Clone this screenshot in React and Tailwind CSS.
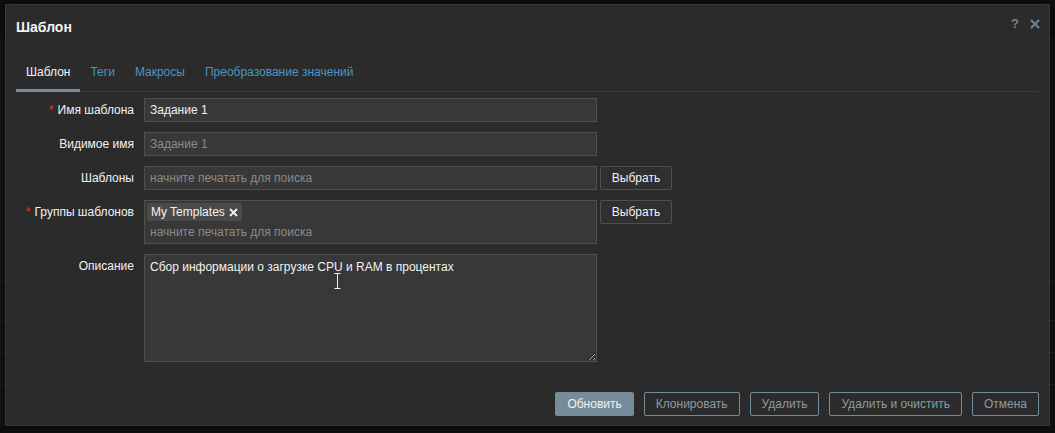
const Row = ({ label, required, children, className = '' }) => (
  <div className={`flex items-start gap-[10px] ${className}`}>
    <div className="flex h-[24px] w-[118px] shrink-0 items-center justify-end text-[12px] text-[#f2f2f2]">
      {required && <span className="mr-[4px] text-[#e33734]">*</span>}
      {label}
    </div>
    <div className="flex items-start gap-[3px]">{children}</div>
  </div>
);

const SelectButton = () => (
  <button
    type="button"
    className="h-[24px] w-[72px] shrink-0 rounded-[2px] border border-[#4f4f4f] bg-[#2f2f2f] text-[12px] text-[#f2f2f2]"
  >
    Выбрать
  </button>
);

const FooterButton = ({ children, primary }) => (
  <button
    type="button"
    className={
      primary
        ? 'h-[24px] rounded-[2px] border border-[#768d99] bg-[#768d99] px-[11px] text-[12px] text-[#f2f2f2]'
        : 'h-[24px] rounded-[2px] border border-[#768d99] bg-transparent px-[11px] text-[12px] text-[#8c9ca5]'
    }
  >
    {children}
  </button>
);

const tabs = ['Шаблон', 'Теги', 'Макросы', 'Преобразование значений'];

export default function App() {
  return (
    <div className="relative h-[433px] w-[1055px] overflow-hidden bg-[#0e0f11] font-['Liberation_Sans',Arial,sans-serif]">
      {/* page behind the overlay */}
      <div className="mt-[38px] flex h-[388px] flex-col bg-[#131416]">
        <div className="mt-[243px] h-px bg-[#1f2022]" />
        <div className="mt-[38px] h-px bg-[#1f2022]" />
        <div className="mt-[31px] h-px bg-[#1f2022]" />
        <div className="mt-[31px] h-px bg-[#1f2022]" />
      </div>

      {/* dialog */}
      <div className="absolute left-[5px] top-[4px] flex h-[422px] w-[1045px] flex-col border border-[#383838] bg-[#2b2b2b] px-[10px] shadow-[0_0_8px_rgba(0,0,0,0.6)]">
        <div className="flex h-[44px] items-center justify-between">
          <h4 className="text-[14px] font-bold text-[#f2f2f2]">Шаблон</h4>
          <div className="-mt-[6px] flex items-center gap-[10px] text-[#6f8592]">
            <span className="text-[13px] font-bold">?</span>
            <svg width="12" height="12" viewBox="0 0 12 12" className="mr-[-2px]">
              <path d="M2 2 L10 10 M10 2 L2 10" stroke="currentColor" strokeWidth="2" />
            </svg>
          </div>
        </div>

        <div className="mt-[10px] flex border-b border-[#383838]">
          {tabs.map((t, i) => (
            <div
              key={t}
              className={
                i === 0
                  ? 'mb-[-1px] border-b-[3px] border-[#768d99] px-[10px] pb-[8px] pt-[4px] text-[12px] text-[#f2f2f2]'
                  : 'px-[10px] pb-[9px] pt-[4px] text-[12px] text-[#4796c4]'
              }
            >
              {t}
            </div>
          ))}
        </div>

        <div className="mt-[6px] flex flex-col">
          <Row label="Имя шаблона" required>
            <div className="flex h-[24px] w-[453px] items-center border border-[#4f4f4f] bg-[#383838] px-[5px] text-[12px] text-[#f2f2f2]">
              Задание 1
            </div>
          </Row>
          <Row label="Видимое имя" className="mt-[10px]">
            <div className="flex h-[24px] w-[453px] items-center border border-[#4f4f4f] bg-[#383838] px-[5px] text-[12px] text-[#8a8a8a]">
              Задание 1
            </div>
          </Row>
          <Row label="Шаблоны" className="mt-[10px]">
            <div className="flex h-[24px] w-[453px] items-center border border-[#4f4f4f] bg-[#383838] px-[5px] text-[12px] text-[#8a8a8a]">
              начните печатать для поиска
            </div>
            <SelectButton />
          </Row>
          <Row label="Группы шаблонов" required className="mt-[10px]">
            <div className="flex h-[44px] w-[453px] flex-col border border-[#4f4f4f] bg-[#383838] px-[2px] pt-[2px] text-[12px]">
              <div className="flex h-[18px] w-fit items-center gap-[4px] rounded-[2px] bg-[#4a4a4a] px-[4px] text-[#f2f2f2]">
                My Templates
                <svg width="9" height="9" viewBox="0 0 9 9">
                  <path d="M1 1 L8 8 M8 1 L1 8" stroke="#f2f2f2" strokeWidth="1.8" />
                </svg>
              </div>
              <div className="mt-[2px] px-[3px] text-[#8a8a8a]">начните печатать для поиска</div>
            </div>
            <SelectButton />
          </Row>
          <Row label="Описание" className="mt-[10px]">
            <div className="relative">
              <textarea
                readOnly
                defaultValue="Сбор информации о загрузке CPU и RAM в процентах"
                className="block h-[108px] w-[453px] resize border border-[#4f4f4f] bg-[#383838] px-[5px] py-[3px] text-[12px] text-[#f2f2f2] outline-none"
              />
              {/* mouse cursor */}
              <svg width="7" height="16" viewBox="0 0 7 16" className="absolute left-[190px] top-[19px]">
                <path d="M0.5 0.5 H6.5 M3.5 0.5 V15.5 M0.5 15.5 H6.5" stroke="#f2f2f2" strokeWidth="1" />
              </svg>
            </div>
          </Row>
        </div>

        <div className="mt-auto mb-[9px] flex justify-end gap-[10px]">
          <FooterButton primary>Обновить</FooterButton>
          <FooterButton>Клонировать</FooterButton>
          <FooterButton>Удалить</FooterButton>
          <FooterButton>Удалить и очистить</FooterButton>
          <FooterButton>Отмена</FooterButton>
        </div>
      </div>
    </div>
  );
}
